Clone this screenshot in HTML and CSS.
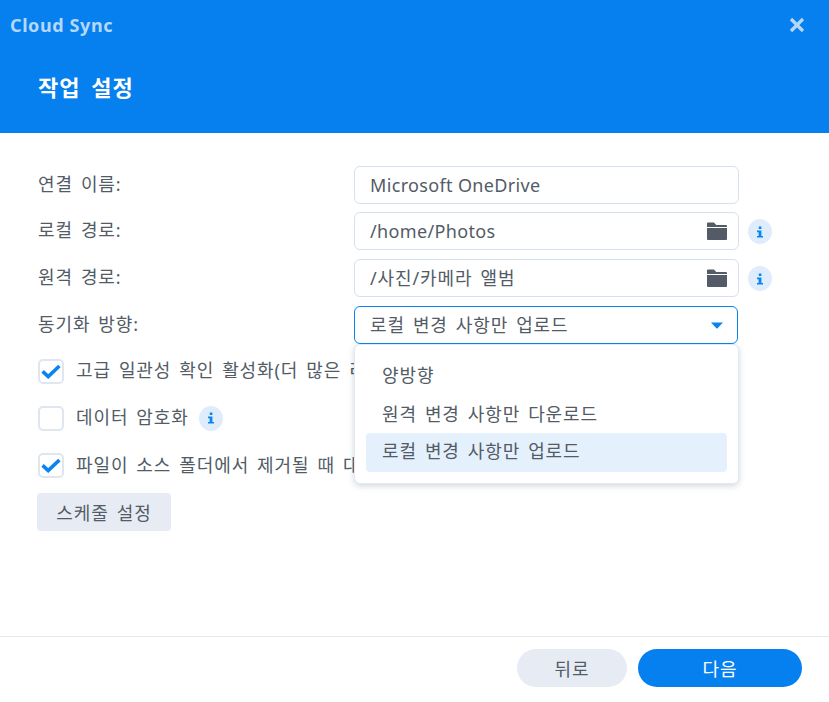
FILE: index.html
```
<!DOCTYPE html>
<html lang="ko">
<head>
<meta charset="utf-8">
<title>Cloud Sync</title>
<link rel="stylesheet" href="styles.css">
</head>
<body>
<div class="dialog">
  <header class="header">
    <div class="titlebar">
      <span class="app">Cloud Sync</span>
      <svg class="close" viewBox="0 0 16 16" width="16" height="16"><path d="M2 2 L14 14 M14 2 L2 14" stroke="#b5d8fa" stroke-width="3.2" fill="none"/></svg>
    </div>
    <h1 class="heading">작업 설정</h1>
  </header>
  <main class="body">
    <div class="row">
      <label class="label">연결 이름:</label>
      <div class="field"><span class="latin">Microsoft OneDrive</span></div>
    </div>
    <div class="row">
      <label class="label">로컬 경로:</label>
      <div class="field"><span class="latin">/home/Photos</span>
        <svg class="folder" viewBox="0 0 20 18" width="20" height="18"><path d="M0 1.5 Q0 .5 1 .5 H7 L9.2 3 H19 Q20 3 20 4 V5 H0 Z M0 6 H20 V17 Q20 18 19 18 H1 Q0 18 0 17 Z" fill="#525b66"/></svg>
      </div>
      <span class="info"><svg viewBox="0 0 8 12" width="8" height="12"><path d="M2.8 0.5h2.6v2.4H2.8z M1 4.6h4.4v5.4H7v1.6H1V10h1.6V6.2H1z" fill="#0a84f0"/></svg></span>
    </div>
    <div class="row">
      <label class="label">원격 경로:</label>
      <div class="field"><span>/사진/카메라 앨범</span>
        <svg class="folder" viewBox="0 0 20 18" width="20" height="18"><path d="M0 1.5 Q0 .5 1 .5 H7 L9.2 3 H19 Q20 3 20 4 V5 H0 Z M0 6 H20 V17 Q20 18 19 18 H1 Q0 18 0 17 Z" fill="#525b66"/></svg>
      </div>
      <span class="info"><svg viewBox="0 0 8 12" width="8" height="12"><path d="M2.8 0.5h2.6v2.4H2.8z M1 4.6h4.4v5.4H7v1.6H1V10h1.6V6.2H1z" fill="#0a84f0"/></svg></span>
    </div>
    <div class="row row-select">
      <label class="label">동기화 방향:</label>
      <div class="select-wrap">
        <div class="field select"><span>로컬 변경 사항만 업로드</span>
          <svg class="caret" viewBox="0 0 12 7" width="12" height="7"><path d="M0 0.5 H12 L6.6 6.2 Q6 6.7 5.4 6.2 Z" fill="#0a84f0"/></svg>
        </div>
        <ul class="menu">
          <li class="opt">양방향</li>
          <li class="opt">원격 변경 사항만 다운로드</li>
          <li class="opt selected">로컬 변경 사항만 업로드</li>
        </ul>
      </div>
    </div>
    <div class="checks">
      <div class="check-row">
        <span class="box"><svg viewBox="0 0 20 15" width="20" height="15"><path d="M1.6 7.4 L7.2 12.6 L18.4 2" stroke="#0a84f0" stroke-width="3.6" fill="none"/></svg></span>
        <span class="check-text">고급 일관성 확인 활성화(더 많은 리</span>
      </div>
      <div class="check-row">
        <span class="box"></span>
        <span class="check-text">데이터 암호화</span>
        <span class="info"><svg viewBox="0 0 8 12" width="8" height="12"><path d="M2.8 0.5h2.6v2.4H2.8z M1 4.6h4.4v5.4H7v1.6H1V10h1.6V6.2H1z" fill="#0a84f0"/></svg></span>
      </div>
      <div class="check-row">
        <span class="box"><svg viewBox="0 0 20 15" width="20" height="15"><path d="M1.6 7.4 L7.2 12.6 L18.4 2" stroke="#0a84f0" stroke-width="3.6" fill="none"/></svg></span>
        <span class="check-text">파일이 소스 폴더에서 제거될 때 대</span>
      </div>
    </div>
    <button class="schedule">스케줄 설정</button>
  </main>
  <footer class="footer">
    <button class="pill back">뒤로</button>
    <button class="pill next">다음</button>
  </footer>
</div>
</body>
</html>
```
FILE: styles.css
```
* { box-sizing: border-box; }
html, body { margin: 0; height: 100%; }
body {
  background: #fff;
  color: #525b66;
  font-family: "Noto Sans", "Noto Sans CJK KR", sans-serif;
  font-size: 18px;
  letter-spacing: .9px;
  word-spacing: 2.4px;
}
.latin { letter-spacing: .35px; word-spacing: 0; }
.dialog { width: 829px; height: 702px; display: flex; flex-direction: column; overflow: hidden; }
.header { height: 133px; background: #0680ee; color: #fff; flex: none; }
.titlebar { height: 49px; padding: 0 24px 0 10px; display: flex; align-items: center; justify-content: space-between; }
.app { font-size: 18px; font-weight: 700; color: #b5d8fa; letter-spacing: .6px; word-spacing: 0; }
.heading { margin: 0; padding: 19px 0 0 38px; font-size: 22px; line-height: 38px; font-weight: 700; letter-spacing: 1px; word-spacing: 4px; }
.body { flex: 1; padding: 33px 0 0 38px; display: flex; flex-direction: column; align-items: flex-start; position: relative; }
.row { display: flex; align-items: flex-start; height: 37px; margin-bottom: 10px; }
.row:first-child { margin-bottom: 9px; }
.label { width: 316px; line-height: 36px; flex: none; }
.row-select { margin-bottom: 15px; }
.field { width: 385px; height: 38px; border: 1px solid #d5e1ec; border-radius: 6px; padding: 0 11px 0 15px; display: flex; align-items: center; justify-content: space-between; line-height: 36px; background: #fff; }
.select { width: 384px; border-color: #0a84f0; padding-right: 14px; }
.select-wrap { position: relative; }
.folder { flex: none; }
.info { width: 24px; height: 25px; border-radius: 50%; background: #deecfb; display: flex; align-items: center; justify-content: center; flex: none; }
.row > .info { margin: 7px 0 0 9px; }
.check-row > .info { margin-left: -2px; }
.menu { position: absolute; z-index: 2; left: 0; top: 38px; width: 385px; height: 140px; margin: 0; padding: 10px 11px; list-style: none; background: #fff; border: 1px solid #e2e9f1; border-radius: 6px; box-shadow: 0 2px 6px rgba(50, 70, 90, .22); }
.opt { height: 39px; line-height: 40px; padding: 0 17px 0 16px; border-radius: 4px; }
.opt.selected { background: #e4f0fc; line-height: 37px; }
.checks { display: flex; flex-direction: column; gap: 21.4px; }
.check-row { display: flex; align-items: center; gap: 12px; height: 26px; white-space: nowrap; }
.check-text { line-height: 24px; margin-top: -2px; }
.box { width: 26px; height: 25px; border: 2px solid #dfe6ef; border-radius: 5px; display: flex; align-items: center; justify-content: center; flex: none; background: #fff; }
.schedule { margin: 14px 0 0 -1px; width: 134px; height: 38px; border: 0; border-radius: 4px; background: #e7ecf4; color: #525b66; font: inherit; letter-spacing: inherit; word-spacing: inherit; }
.footer { flex: none; height: 66px; border-top: 1px solid #e2e9f1; display: flex; justify-content: flex-end; gap: 11px; padding: 12px 27px 0 0; }
.pill { height: 38px; border: 0; border-radius: 19px; font: inherit; letter-spacing: inherit; }
.back { width: 110px; background: #e7ecf4; color: #525b66; }
.next { width: 164px; background: #0680ee; color: #fff; }
```
